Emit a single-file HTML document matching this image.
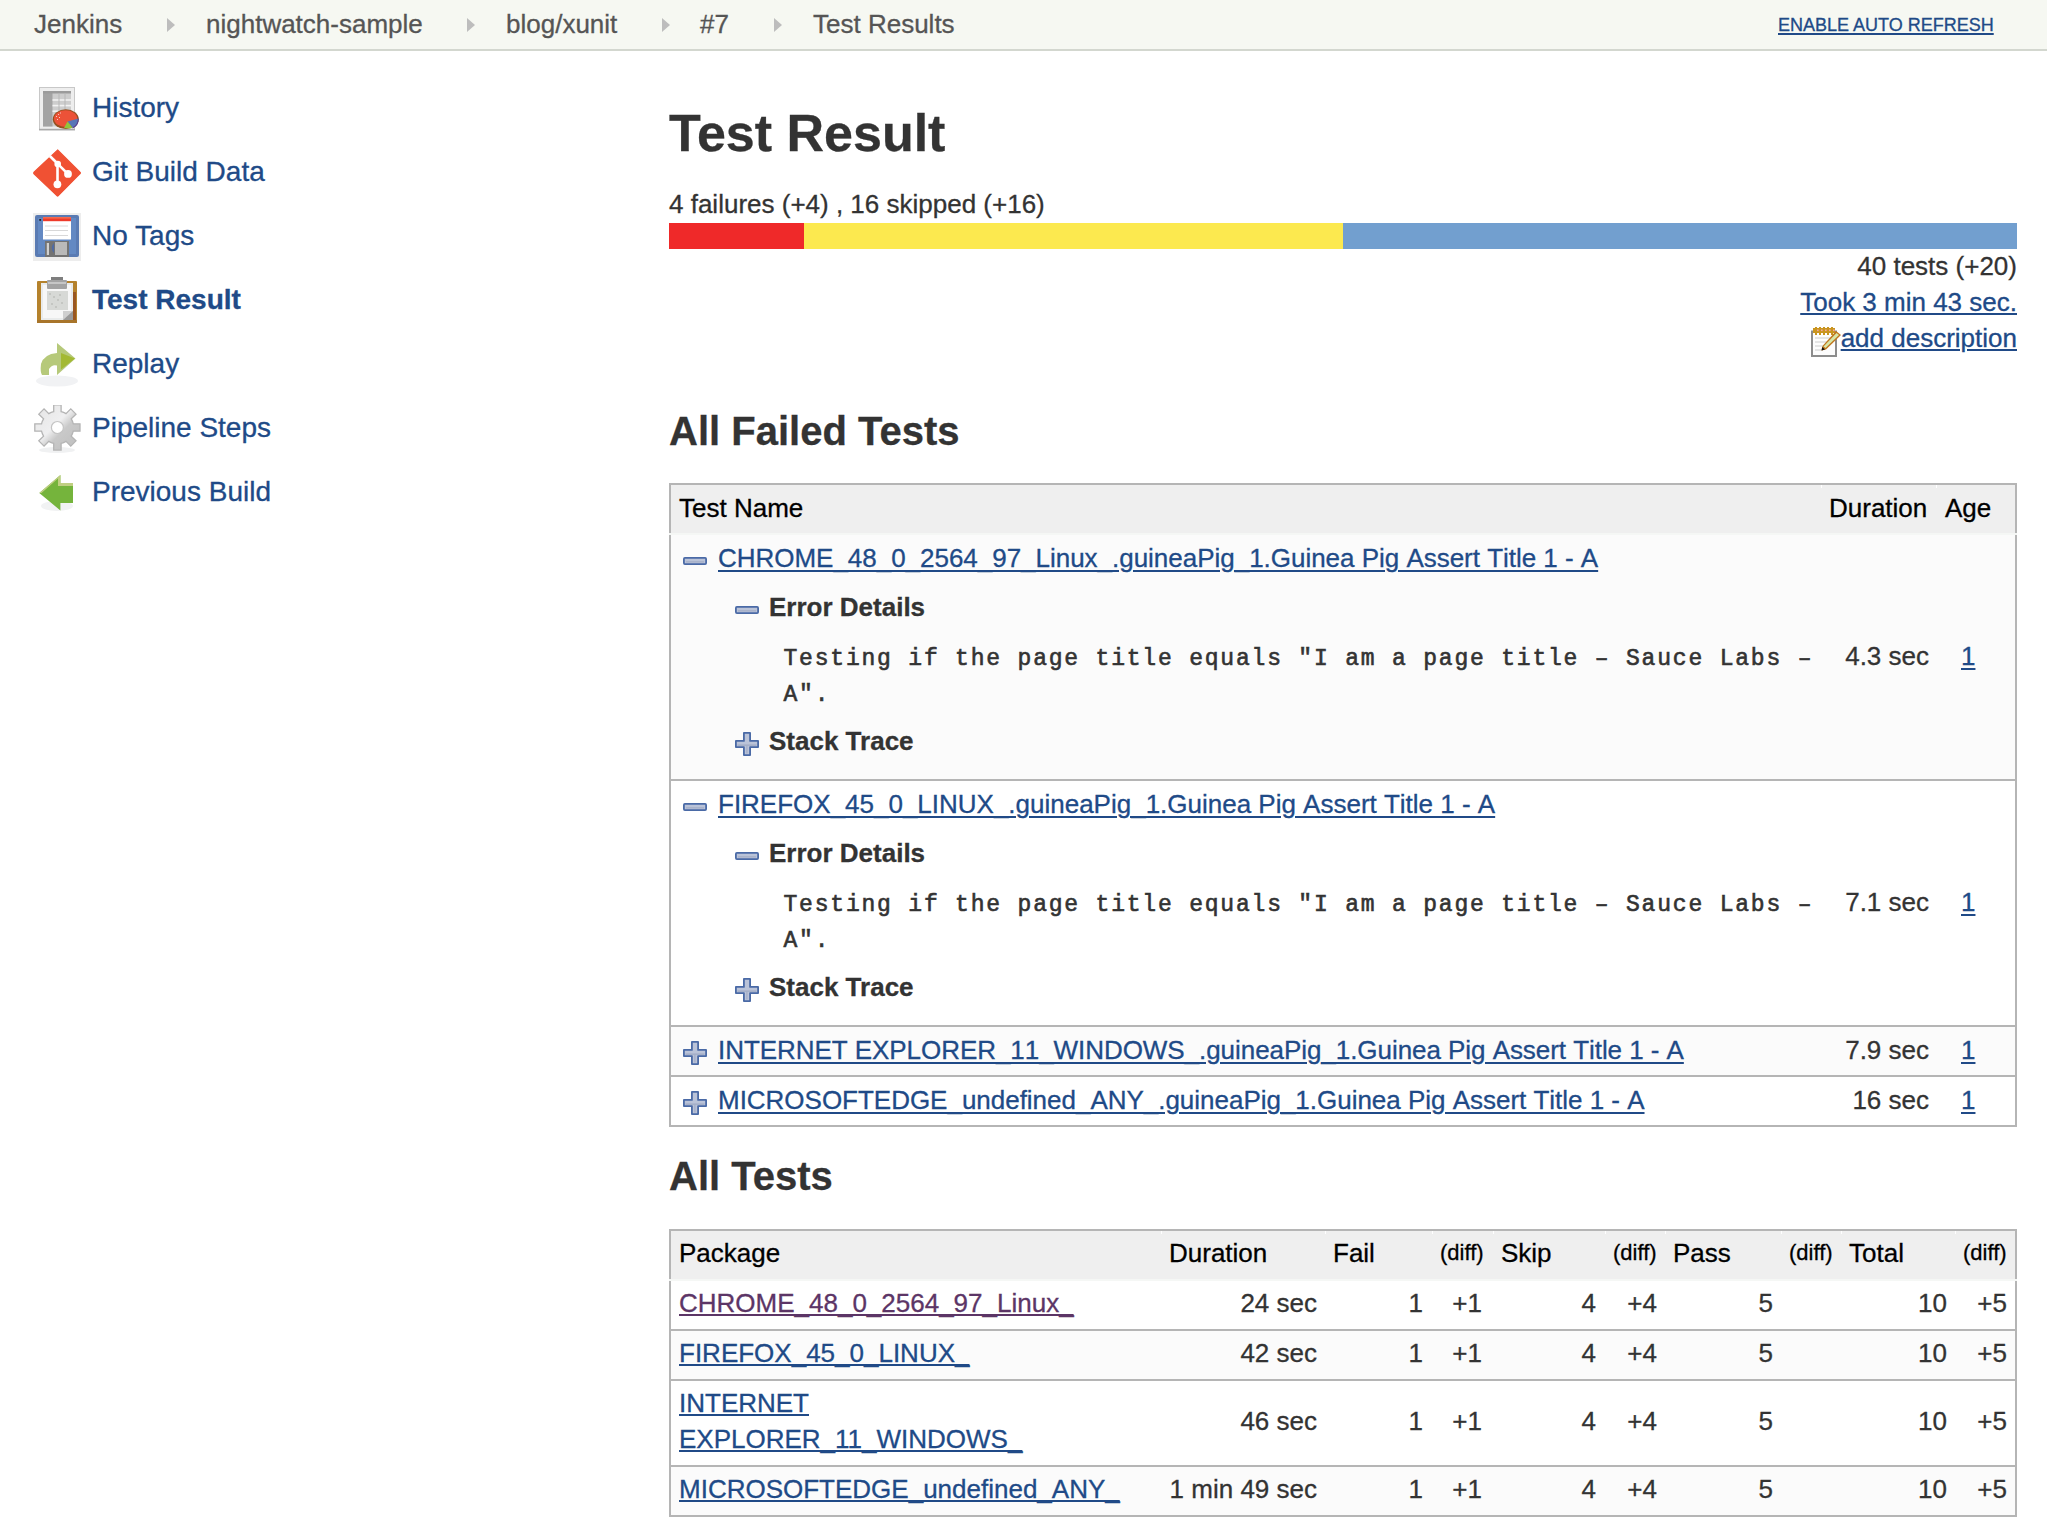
<!DOCTYPE html>
<html><head><meta charset="utf-8">
<style>
html,body{margin:0;padding:0}
body{-webkit-text-stroke:0.3px;width:2047px;height:1539px;overflow:hidden;position:relative;background:#fff;font-family:"Liberation Sans",sans-serif;color:#333}
.a{position:absolute;white-space:nowrap}
.s{font-size:26px;line-height:36px}
.m{font-family:"Liberation Mono",monospace;font-size:23px;line-height:36px;letter-spacing:1.8px;-webkit-text-stroke:0.6px}
.lk{color:#204a87;text-decoration:underline;text-underline-offset:3px;text-decoration-thickness:2px}
.vis{color:#5c3566;text-decoration:underline;text-underline-offset:3px;text-decoration-thickness:2px}
.r{text-align:right}
.u2{text-underline-offset:2px!important}
#bc{position:absolute;left:0;top:0;width:2047px;height:49px;background:#f6f8f2;border-bottom:2px solid #d3d7cf}
.bct{color:#555;font-size:26px;line-height:36px;top:6px}
.arr{position:absolute;top:18px;width:0;height:0;border-top:7px solid transparent;border-bottom:7px solid transparent;border-left:8px solid #bdbdbd}
.side{font-size:28px;line-height:36px;color:#204a87;left:92px}
.ico{position:absolute;left:33px;width:48px;height:48px}
.tbl{position:absolute;left:669px;width:1344px;border:2px solid #b5b5b5}
.hdr{position:absolute;left:0;width:1344px;background:#efefef}
.row{position:absolute;left:0;width:1344px}
.bd{position:absolute;left:0;width:1344px;height:2px;background:#b5b5b5}
.hd{color:#000}
.df{font-size:22px;line-height:36px;color:#000}
</style></head>
<body>
<!-- breadcrumb bar -->
<div id="bc"></div>
<div class="a bct" style="left:34px">Jenkins</div>
<div class="arr" style="left:167px"></div>
<div class="a bct" style="left:206px">nightwatch-sample</div>
<div class="arr" style="left:467px"></div>
<div class="a bct" style="left:506px">blog/xunit</div>
<div class="arr" style="left:662px"></div>
<div class="a bct" style="left:700px">#7</div>
<div class="arr" style="left:774px"></div>
<div class="a bct" style="left:813px">Test Results</div>
<div class="a lk" style="left:1778px;top:13px;font-size:18px;line-height:24px;text-underline-offset:2px;text-decoration-thickness:1.5px">ENABLE AUTO REFRESH</div>

<!-- side panel -->
<div class="a side" style="top:90px">History</div>
<div class="a side" style="top:154px">Git Build Data</div>
<div class="a side" style="top:218px">No Tags</div>
<div class="a side" style="top:282px;font-weight:bold">Test Result</div>
<div class="a side" style="top:346px">Replay</div>
<div class="a side" style="top:410px">Pipeline Steps</div>
<div class="a side" style="top:474px">Previous Build</div>
<svg class="ico" style="top:85px" width="48" height="48" viewBox="33 85 48 48">
  <rect x="39.5" y="87.5" width="35" height="42.5" fill="#eeeeee" stroke="#c8c8c8" stroke-width="1"/>
  <rect x="39" y="128.8" width="36" height="1.4" fill="#a9a9a9"/>
  <rect x="43" y="91" width="28" height="35.5" fill="#cdcdcd"/>
  <rect x="43" y="91" width="9.5" height="35.5" fill="#a3a3a3"/>
  <rect x="43" y="91" width="28" height="2.5" fill="#9b9b9b"/>
  <g fill="#f2f2f2"><rect x="52.5" y="99.2" width="18.5" height="1.6"/><rect x="52.5" y="104.8" width="18.5" height="1.6"/><rect x="52.5" y="110.4" width="18.5" height="1.6"/></g>
  <g fill="#b8b8b8"><rect x="58.5" y="93.5" width="1" height="33"/><rect x="64.5" y="93.5" width="1" height="33"/></g>
  <ellipse cx="65.8" cy="119.2" rx="13" ry="9.9" fill="#95501f"/>
  <ellipse cx="65.6" cy="118.6" rx="11.6" ry="8.4" fill="#ec5238"/>
  <path d="M67.5 121.5 L78.6 118.5 Q78.6 125.5 72.5 127.8 Z" fill="#5876b8"/>
  <path d="M78.6 118.5 Q79 126 72.5 128.5 L73 127 Q77.5 125 77.8 119 Z" fill="#5a3c8c"/>
  <path d="M67.5 121.5 L72.5 127.8 Q68 128.8 64 128 Z" fill="#92c63c"/>
  <g fill="#f6c9bf"><rect x="56" y="116" width="1" height="1"/><rect x="58" y="114" width="1" height="1"/><rect x="60" y="112.5" width="1" height="1"/><rect x="57" y="119" width="1" height="1"/><rect x="59" y="117" width="1" height="1"/></g>
</svg>
<svg class="ico" style="top:149px" width="48" height="48" viewBox="33 149 48 48">
<path d="M57.6 150 L80 172.3 Q80.8 173 80 173.7 L58.3 195.7 Q57.6 196.4 56.9 195.7 L34 173.7 Q33.3 173 34 172.3 Z" fill="#f05133" stroke="#f05133" stroke-width="1.2"/>
<g stroke="#fff" stroke-width="2.6" fill="#fff">
<line x1="49.8" y1="156" x2="57.7" y2="163.8"/><line x1="57.5" y1="163.8" x2="57.5" y2="184"/><line x1="57.7" y1="163.8" x2="67.8" y2="173.8"/>
</g>
<g fill="#fff"><circle cx="57.7" cy="164" r="3.3"/><circle cx="57.4" cy="184.3" r="3.9"/><circle cx="68" cy="173.9" r="3.9"/></g>
</svg>
<svg class="ico" style="top:213px" width="48" height="48" viewBox="33 213 48 48">
  <rect x="33" y="213" width="48" height="48" fill="#ededed"/>
  <path d="M37 215 H77 Q79 215 79 217 V255 Q79 257 77 257 H37 Q35 257 35 255 V217 Q35 215 37 215 Z" fill="#5a7bb3"/>
  <rect x="38" y="218" width="38" height="36" fill="#6b95cf" opacity="0.55"/>
  <rect x="43" y="217" width="28" height="22.5" fill="#ffffff"/>
  <rect x="43" y="217" width="28" height="4.2" fill="#ee3a2a"/>
  <rect x="43" y="217" width="28" height="1.6" fill="#f46a4e"/>
  <g stroke="#d8d8d8" stroke-width="1"><line x1="45" y1="226" x2="68" y2="226"/><line x1="45" y1="230.5" x2="68" y2="230.5"/><line x1="45" y1="235.5" x2="68" y2="235.5"/></g>
  <rect x="39.3" y="219" width="1.8" height="1.8" fill="#222"/>
  <rect x="45" y="241" width="24" height="16" fill="#737373"/>
  <rect x="55" y="242" width="12" height="13" fill="#b9b9b9"/>
  <rect x="46.8" y="243" width="2.2" height="12" fill="#d0d0d0"/>
  <path d="M54 243 V253 Q49.5 248 54 243 Z" fill="#4f6aa3"/>
</svg>
<svg class="ico" style="top:277px" width="48" height="48" viewBox="33 277 48 48">
  <rect x="37" y="281" width="40" height="42" rx="1" fill="#b5822c"/>
  <rect x="73" y="292" width="3" height="30" fill="#9a5722"/>
  <rect x="41" y="283" width="32" height="37" fill="#e9ebeb"/>
  <rect x="43" y="285" width="28" height="33" fill="#f7f7f7"/>
  <rect x="47" y="291" width="21" height="19" fill="#d7d9d6"/>
  <g fill="#c4c6c2"><rect x="49" y="293" width="2" height="2"/><rect x="53" y="296" width="2" height="2"/><rect x="57" y="299" width="2" height="2"/><rect x="61" y="302" width="2" height="2"/><rect x="51" y="303" width="2" height="2"/><rect x="59" y="294" width="2" height="2"/><rect x="55" y="306" width="2" height="2"/></g>
  <path d="M63 311 H73 V320 H63 Z" fill="#9a9a9a"/>
  <path d="M63 311 L73 311 L63 320 Z" fill="#cfcfcf"/>
  <rect x="51" y="277" width="12" height="3" fill="#7e7e7e"/>
  <rect x="47" y="280" width="20" height="9" rx="1" fill="#a3a3a3"/>
  <rect x="48" y="282" width="18" height="2" fill="#c6c6c6"/>
  <rect x="37" y="320" width="40" height="3" fill="#a8752a"/>
</svg>
<svg class="ico" style="top:341px" width="48" height="48" viewBox="33 341 48 48">
  <ellipse cx="57" cy="381" rx="21" ry="5.5" fill="#f1f2f4"/>
  <path d="M57 343 L75.5 358.6 L57 375 V365.5 Q52 364 49 369 V375 H42 Q40 372 41 364 Q44 354 57 353 Z" fill="#b6c97a"/>
  <path d="M61 353 L75 358.6 L61 369.5 Z" fill="#a3b933"/>
</svg>
<svg class="ico" style="top:405px" width="48" height="48" viewBox="33 405 48 48">
<defs><linearGradient id="gg" x1="0" y1="0" x2="1" y2="1"><stop offset="0" stop-color="#e4e4e4"/><stop offset="0.45" stop-color="#efeff0"/><stop offset="0.6" stop-color="#c9c9c9"/><stop offset="1" stop-color="#bdbdbd"/></linearGradient></defs>
<ellipse cx="57" cy="450" rx="18" ry="3" fill="#f0f1f2"/>
<path d="M53.70,411.63 L53.70,404.90 L61.10,404.90 L61.10,411.63 A16.3,16.3 0 0 1 66.01,413.66 L66.01,413.66 L70.76,408.90 L76.00,414.14 L71.24,418.89 A16.3,16.3 0 0 1 73.27,423.80 L73.27,423.80 L80.00,423.80 L80.00,431.20 L73.27,431.20 A16.3,16.3 0 0 1 71.24,436.11 L71.24,436.11 L76.00,440.86 L70.76,446.10 L66.01,441.34 A16.3,16.3 0 0 1 61.10,443.37 L61.10,443.37 L61.10,450.10 L53.70,450.10 L53.70,443.37 A16.3,16.3 0 0 1 48.79,441.34 L48.79,441.34 L44.04,446.10 L38.80,440.86 L43.56,436.11 A16.3,16.3 0 0 1 41.53,431.20 L41.53,431.20 L34.80,431.20 L34.80,423.80 L41.53,423.80 A16.3,16.3 0 0 1 43.56,418.89 L43.56,418.89 L38.80,414.14 L44.04,408.90 L48.79,413.66 A16.3,16.3 0 0 1 53.70,411.63 Z" fill="url(#gg)" stroke="#b4b4b4" stroke-width="1.3"/>
<circle cx="57.4" cy="427.5" r="6" fill="#fff" stroke="#c4c4c4" stroke-width="1.2"/>
</svg>
<svg class="ico" style="top:469px" width="48" height="48" viewBox="33 469 48 48">
  <ellipse cx="57" cy="506" rx="16" ry="5" fill="#f1f2f3"/>
  <path d="M39.3 493 L60.4 475 V483 H73 V503 H60.4 V510.5 Z" fill="#75b43c"/>
  <path d="M39.3 493 L60.4 475 V483 H73 V486 H58 V478.5 L41.5 493 Z" fill="#c0cf82"/>
</svg>


<!-- main -->
<div class="a" style="left:669px;top:103px;font-size:52px;line-height:60px;font-weight:bold">Test Result</div>
<div class="a s" style="left:669px;top:186px">4 failures (+4) , 16 skipped (+16)</div>
<div class="a" style="left:669px;top:223px;width:1348px;height:26px;background:#729fcf">
  <div style="float:left;width:135px;height:26px;background:#ef2929"></div>
  <div style="float:left;width:539px;height:26px;background:#fce94f"></div>
</div>
<div class="a s r" style="right:30px;top:248px">40 tests (+20)</div>
<div class="a s r lk u2" style="right:30px;top:284px">Took 3 min 43 sec.</div>
<div class="a s r lk u2" style="right:30px;top:320px">add description</div>
<svg class="a" style="left:1810px;top:325px" width="32" height="32" viewBox="1810 325 32 32">
<rect x="1812" y="331.5" width="24" height="24.5" fill="#fdfdfd" stroke="#8d8d8d" stroke-width="2"/>
<g stroke="#d6d6d6" stroke-width="1.2"><line x1="1815" y1="338" x2="1831" y2="338"/><line x1="1815" y1="342" x2="1831" y2="342"/><line x1="1815" y1="346" x2="1826" y2="346"/><line x1="1815" y1="350" x2="1823" y2="350"/></g>
<rect x="1813" y="328" width="22" height="5" fill="#c9951f"/>
<g fill="#c9951f"><rect x="1815" y="327" width="2" height="8"/><rect x="1819" y="327" width="2" height="8"/><rect x="1823" y="327" width="2" height="8"/><rect x="1827" y="327" width="2" height="8"/><rect x="1831" y="327" width="2" height="8"/></g>
<g fill="#f4a3a0"><rect x="1817" y="329.5" width="1.6" height="1.6"/><rect x="1821" y="329.5" width="1.6" height="1.6"/><rect x="1825" y="329.5" width="1.6" height="1.6"/><rect x="1829" y="329.5" width="1.6" height="1.6"/><rect x="1833" y="329.5" width="1.6" height="1.6"/></g>
<path d="M1836 331 L1841 335 L1826 349.5 L1821.5 350.5 L1822.5 346 Z" fill="#c1761c"/>
<path d="M1836.5 333 L1839 335 L1825.5 348 L1823.5 346.5 Z" fill="#d7e6a8"/>
<path d="M1821.5 350.5 L1822.3 347 L1825 349.5 Z" fill="#111"/>
</svg>

<div class="a" style="left:669px;top:409px;font-size:40px;line-height:44px;font-weight:bold">All Failed Tests</div>

<!-- failed tests table -->
<div class="tbl" style="top:483px;height:640px">
  <div class="hdr" style="top:0;height:48px"></div>
  <div class="row" style="top:50px;height:244px;background:#fbfbfb"></div>
  <div class="bd" style="top:294px"></div>
  <div class="row" style="top:296px;height:244px;background:#fff"></div>
  <div class="bd" style="top:540px"></div>
  <div class="row" style="top:542px;height:48px;background:#fbfbfb"></div>
  <div class="bd" style="top:590px"></div>
  <div class="row" style="top:592px;height:48px;background:#fff"></div>
</div>
<div class="a" style="left:669px;top:533px;width:1348px;height:2px;background:#f5f7f5"></div>
<div class="a s hd" style="left:679px;top:490px">Test Name</div>
<div class="a s hd" style="left:1829px;top:490px">Duration</div>
<div class="a s hd" style="left:1945px;top:490px">Age</div>

<!-- row 1 -->
<div class="a s lk" style="letter-spacing:-0.022px;font-kerning:none;left:718px;top:540px">CHROME_48_0_2564_97_Linux_.guineaPig_1.Guinea Pig Assert Title 1 - A</div>
<div class="a s" style="left:769px;top:589px;font-weight:bold">Error Details</div>
<div class="a m" style="left:783.5px;top:641px">Testing if the page title equals "I am a page title &#8211; Sauce Labs &#8211;</div>
<div class="a m" style="left:783.5px;top:677px">A".</div>
<div class="a s" style="left:769px;top:723px;font-weight:bold">Stack Trace</div>
<div class="a s r" style="right:118px;top:638px">4.3 sec</div>
<div class="a s lk" style="left:1961px;top:638px">1</div>
<!-- row 2 -->
<div class="a s lk" style="letter-spacing:-0.006px;font-kerning:none;left:718px;top:786px">FIREFOX_45_0_LINUX_.guineaPig_1.Guinea Pig Assert Title 1 - A</div>
<div class="a s" style="left:769px;top:835px;font-weight:bold">Error Details</div>
<div class="a m" style="left:783.5px;top:887px">Testing if the page title equals "I am a page title &#8211; Sauce Labs &#8211;</div>
<div class="a m" style="left:783.5px;top:923px">A".</div>
<div class="a s" style="left:769px;top:969px;font-weight:bold">Stack Trace</div>
<div class="a s r" style="right:118px;top:884px">7.1 sec</div>
<div class="a s lk" style="left:1961px;top:884px">1</div>
<!-- row 3 -->
<div class="a s lk" style="letter-spacing:-0.053px;font-kerning:none;left:718px;top:1032px">INTERNET EXPLORER_11_WINDOWS_.guineaPig_1.Guinea Pig Assert Title 1 - A</div>
<div class="a s r" style="right:118px;top:1032px">7.9 sec</div>
<div class="a s lk" style="left:1961px;top:1032px">1</div>
<!-- row 4 -->
<div class="a s lk" style="letter-spacing:-0.018px;font-kerning:none;left:718px;top:1082px">MICROSOFTEDGE_undefined_ANY_.guineaPig_1.Guinea Pig Assert Title 1 - A</div>
<div class="a s r" style="right:118px;top:1082px">16 sec</div>
<div class="a s lk" style="left:1961px;top:1082px">1</div>
<svg width="0" height="0" style="position:absolute">
<defs>
<symbol id="pl" viewBox="0 0 24 24"><path d="M8.9 0.9 H15.1 V8.9 H23.1 V15.1 H15.1 V23.1 H8.9 V15.1 H0.9 V8.9 H8.9 Z" fill="#bac3d8" stroke="#4a6aa6" stroke-width="1.8" stroke-linejoin="round"/><rect x="2.5" y="12.4" width="19" height="1.5" fill="#a4afc7"/><rect x="11.2" y="13" width="1.4" height="8.5" fill="#a4afc7"/></symbol>
<symbol id="mi" viewBox="0 0 24 8"><rect x="0.9" y="0.9" width="22.2" height="6.2" rx="1" fill="#bac3d8" stroke="#4a6aa6" stroke-width="1.8"/><rect x="3" y="4.2" width="18" height="1.3" fill="#a3aec6"/></symbol>
</defs></svg>
<svg class="a" style="left:683px;top:557px" width="24" height="8"><use href="#mi"/></svg>
<svg class="a" style="left:735px;top:606px" width="24" height="8"><use href="#mi"/></svg>
<svg class="a" style="left:735px;top:732px" width="24" height="24"><use href="#pl"/></svg>
<svg class="a" style="left:683px;top:803px" width="24" height="8"><use href="#mi"/></svg>
<svg class="a" style="left:735px;top:852px" width="24" height="8"><use href="#mi"/></svg>
<svg class="a" style="left:735px;top:978px" width="24" height="24"><use href="#pl"/></svg>
<svg class="a" style="left:683px;top:1041px" width="24" height="24"><use href="#pl"/></svg>
<svg class="a" style="left:683px;top:1091px" width="24" height="24"><use href="#pl"/></svg>

<div class="a" style="left:669px;top:1154px;font-size:40px;line-height:44px;font-weight:bold">All Tests</div>

<!-- all tests table -->
<div class="tbl" style="top:1229px;height:284px">
  <div class="hdr" style="top:0;height:48px"></div>
  <div class="row" style="top:50px;height:48px;background:#fff"></div>
  <div class="bd" style="top:98px"></div>
  <div class="row" style="top:100px;height:48px;background:#fbfbfb"></div>
  <div class="bd" style="top:148px"></div>
  <div class="row" style="top:150px;height:84px;background:#fff"></div>
  <div class="bd" style="top:234px"></div>
  <div class="row" style="top:236px;height:48px;background:#fbfbfb"></div>
</div>
<div class="a" style="left:669px;top:1279px;width:1348px;height:2px;background:#f5f7f5"></div>
<div class="a s hd" style="left:679px;top:1235px">Package</div>
<div class="a s hd" style="left:1169px;top:1235px">Duration</div>
<div class="a s hd" style="left:1333px;top:1235px">Fail</div>
<div class="a df" style="left:1440px;top:1235px">(diff)</div>
<div class="a s hd" style="left:1501px;top:1235px">Skip</div>
<div class="a df" style="left:1613px;top:1235px">(diff)</div>
<div class="a s hd" style="left:1673px;top:1235px">Pass</div>
<div class="a df" style="left:1789px;top:1235px">(diff)</div>
<div class="a s hd" style="left:1849px;top:1235px">Total</div>
<div class="a df" style="left:1963px;top:1235px">(diff)</div>
<div class="a s vis u2" style="left:679px;top:1285px">CHROME_48_0_2564_97_Linux_</div>
<div class="a s r" style="right:730px;top:1285px">24 sec</div>
<div class="a s r" style="right:624px;top:1285px">1</div>
<div class="a s r" style="right:565px;top:1285px">+1</div>
<div class="a s r" style="right:451px;top:1285px">4</div>
<div class="a s r" style="right:390px;top:1285px">+4</div>
<div class="a s r" style="right:274px;top:1285px">5</div>
<div class="a s r" style="right:100px;top:1285px">10</div>
<div class="a s r" style="right:40px;top:1285px">+5</div>
<div class="a s lk u2" style="left:679px;top:1335px">FIREFOX_45_0_LINUX_</div>
<div class="a s r" style="right:730px;top:1335px">42 sec</div>
<div class="a s r" style="right:624px;top:1335px">1</div>
<div class="a s r" style="right:565px;top:1335px">+1</div>
<div class="a s r" style="right:451px;top:1335px">4</div>
<div class="a s r" style="right:390px;top:1335px">+4</div>
<div class="a s r" style="right:274px;top:1335px">5</div>
<div class="a s r" style="right:100px;top:1335px">10</div>
<div class="a s r" style="right:40px;top:1335px">+5</div>
<div class="a s lk u2" style="left:679px;top:1385px">INTERNET</div>
<div class="a s lk u2" style="left:679px;top:1421px">EXPLORER_11_WINDOWS_</div>
<div class="a s r" style="right:730px;top:1403px">46 sec</div>
<div class="a s r" style="right:624px;top:1403px">1</div>
<div class="a s r" style="right:565px;top:1403px">+1</div>
<div class="a s r" style="right:451px;top:1403px">4</div>
<div class="a s r" style="right:390px;top:1403px">+4</div>
<div class="a s r" style="right:274px;top:1403px">5</div>
<div class="a s r" style="right:100px;top:1403px">10</div>
<div class="a s r" style="right:40px;top:1403px">+5</div>
<div class="a s lk u2" style="left:679px;top:1471px">MICROSOFTEDGE_undefined_ANY_</div>
<div class="a s r" style="right:730px;top:1471px">1 min 49 sec</div>
<div class="a s r" style="right:624px;top:1471px">1</div>
<div class="a s r" style="right:565px;top:1471px">+1</div>
<div class="a s r" style="right:451px;top:1471px">4</div>
<div class="a s r" style="right:390px;top:1471px">+4</div>
<div class="a s r" style="right:274px;top:1471px">5</div>
<div class="a s r" style="right:100px;top:1471px">10</div>
<div class="a s r" style="right:40px;top:1471px">+5</div>
<div class="a" style="left:1821px;top:485px;width:1px;height:3px;background:#fff"></div>
<div class="a" style="left:1936px;top:485px;width:1px;height:3px;background:#fff"></div>
<div class="a" style="left:1161px;top:1231px;width:1px;height:3px;background:#fff"></div>
<div class="a" style="left:1325px;top:1231px;width:1px;height:3px;background:#fff"></div>
<div class="a" style="left:1432px;top:1231px;width:1px;height:3px;background:#fff"></div>
<div class="a" style="left:1493px;top:1231px;width:1px;height:3px;background:#fff"></div>
<div class="a" style="left:1605px;top:1231px;width:1px;height:3px;background:#fff"></div>
<div class="a" style="left:1665px;top:1231px;width:1px;height:3px;background:#fff"></div>
<div class="a" style="left:1781px;top:1231px;width:1px;height:3px;background:#fff"></div>
<div class="a" style="left:1841px;top:1231px;width:1px;height:3px;background:#fff"></div>
<div class="a" style="left:1955px;top:1231px;width:1px;height:3px;background:#fff"></div>
</body></html>
